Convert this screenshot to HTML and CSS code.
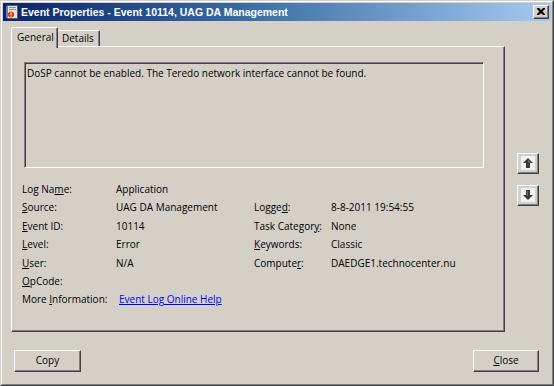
FILE: index.html
```html
<!DOCTYPE html>
<html>
<head>
<meta charset="utf-8">
<title>Event Properties</title>
<link rel="stylesheet" href="styles.css">
</head>
<body>
<div class="window">
  <div class="frame">
    <div class="titlebar">
      <svg class="appicon" width="14" height="14" viewBox="0 0 14 14">
        <rect x="2.5" y="0.5" width="10" height="13" fill="#e8e4dc" stroke="#5a5a6e"/>
        <rect x="4" y="2" width="7" height="1" fill="#8a8aa0"/>
        <rect x="4" y="4" width="7" height="1" fill="#8a8aa0"/>
        <rect x="1" y="1" width="2" height="12" fill="#6e7fa8"/>
        <circle cx="6" cy="9.5" r="3" fill="#e03020"/>
        <rect x="5.3" y="7.3" width="1.4" height="2.6" fill="#ffd840"/>
        <rect x="5.3" y="10.5" width="1.4" height="1.2" fill="#ffd840"/>
      </svg>
      <span class="title">Event Properties - Event 10114, UAG DA Management</span>
      <div class="xbtn">
        <svg width="8" height="7" viewBox="0 0 8 7">
          <path d="M0 0h2l2 2 2-2h2v1l-2.5 2.5L8 6v1H6L4 5 2 7H0V6l2.5-2.5L0 1z" fill="#000"/>
        </svg>
      </div>
    </div>
    <div class="content">
      <div class="main">
        <div class="left">
          <div class="tabs">
            <div class="tab active">General</div>
            <div class="tab">Details</div>
          </div>
          <div class="panel">
            <div class="msgbox">DoSP cannot be enabled. The Teredo network interface cannot be found.</div>
            <div class="props">
              <div>Log Na<u>m</u>e:</div><div>Application</div><div></div><div></div>
              <div><u>S</u>ource:</div><div>UAG DA Management</div><div>Logge<u>d</u>:</div><div>8-8-2011 19:54:55</div>
              <div><u>E</u>vent ID:</div><div>10114</div><div>Task Categor<u>y</u>:</div><div>None</div>
              <div><u>L</u>evel:</div><div>Error</div><div><u>K</u>eywords:</div><div>Classic</div>
              <div><u>U</u>ser:</div><div>N/A</div><div>Compute<u>r</u>:</div><div>DAEDGE1.technocenter.nu</div>
              <div><u>O</u>pCode:</div><div></div><div></div><div></div>
              <div>More <u>I</u>nformation:</div><div><a class="link" href="#">Event Log Online Help</a></div><div></div><div></div>
            </div>
          </div>
        </div>
        <div class="arrows">
          <div class="abtn">
            <svg width="14" height="14" viewBox="0 0 14 14">
              <rect width="14" height="14" fill="#f2f2f0"/>
              <path d="M7 2 L12 7 L9 7 L9 12 L5 12 L5 7 L2 7 Z" fill="#3a3a3a"/>
              <path d="M7 3.5 L10 6.5 L7 6.5 Z" fill="#6a6a6a"/>
            </svg>
          </div>
          <div class="abtn">
            <svg width="14" height="14" viewBox="0 0 14 14">
              <rect width="14" height="14" fill="#f2f2f0"/>
              <path d="M5 2 L9 2 L9 7 L12 7 L7 12 L2 7 L5 7 Z" fill="#3a3a3a"/>
              <path d="M5.8 3 L7 3 L7 8 L5.8 8 Z" fill="#6a6a6a"/>
            </svg>
          </div>
        </div>
      </div>
      <div class="buttons">
        <div class="btn copy">Copy</div>
        <div class="btn close"><u>C</u>lose</div>
      </div>
    </div>
  </div>
</div>
</body>
</html>
```

FILE: styles.css
```css
html, body {
  margin: 0;
  padding: 0;
  width: 554px;
  height: 386px;
  overflow: hidden;
  background: #d4d0c8;
}

body {
  font-family: "Open Sans", "Noto Sans", sans-serif;
  font-size: 10px;
  color: #000;
}

.window {
  box-sizing: border-box;
  width: 554px;
  height: 386px;
  border: 1px solid;
  border-color: #d4d0c8 #404040 #404040 #d4d0c8;
  background: #d4d0c8;
}

.frame {
  box-sizing: border-box;
  height: 100%;
  border: 1px solid;
  border-color: #fff #808080 #808080 #fff;
  padding: 1px;
  display: flex;
  flex-direction: column;
}

.titlebar {
  height: 18px;
  flex: none;
  display: flex;
  align-items: center;
  padding: 0 2px;
  background: linear-gradient(to right, #0a246a 0%, #3a6ea5 45%, #a6caf0 100%);
}

.appicon {
  flex: none;
  margin-right: 2px;
}

.title {
  font-family: "Liberation Sans", Arial, sans-serif;
  font-weight: bold;
  font-size: 10.5px;
  color: #fff;
  white-space: nowrap;
}

.xbtn {
  box-sizing: border-box;
  margin-left: auto;
  width: 16px;
  height: 14px;
  background: #d4d0c8;
  border: 1px solid;
  border-color: #fff #404040 #404040 #fff;
  box-shadow: inset -1px -1px 0 #808080;
  display: flex;
  align-items: center;
  justify-content: center;
  padding: 0 1px 1px 0;
}

.content {
  flex: 1;
  padding: 6px 12px 0 8px;
}

.main {
  display: flex;
}

.left {
  width: 494px;
}

.tabs {
  display: flex;
  align-items: flex-end;
  height: 19px;
  position: relative;
  z-index: 1;
}

.tab {
  box-sizing: border-box;
  height: 16px;
  padding: 0 4px;
  border: 1px solid;
  border-bottom: none;
  border-color: #fff #404040 transparent #fff;
  box-shadow: inset -1px 0 0 #808080;
  border-radius: 2px 2px 0 0;
  line-height: 15px;
  background: #d4d0c8;
}

.tab.active {
  width: 47px;
  height: 21px;
  margin-bottom: -2px;
  padding: 0 4px 0 5px;
  line-height: 18px;
}

.tab + .tab {
  width: 42px;
  padding-left: 4px;
  border-left: none;
}

.panel {
  box-sizing: border-box;
  height: 286px;
  border: 1px solid;
  border-color: #fff #404040 #404040 #fff;
  box-shadow: inset -1px -1px 0 #808080;
  padding: 15px 10px 0 10px;
}

.msgbox {
  box-sizing: border-box;
  width: 460px;
  height: 106px;
  margin-left: 2px;
  border: 1px solid;
  border-color: #808080 #fff #fff #808080;
  box-shadow: inset 1px 1px 0 #404040, inset -1px -1px 0 #d4d0c8;
  padding: 2px 2px;
  line-height: 16px;
}

.props {
  margin-top: 12px;
  display: grid;
  grid-template-columns: 94px 138px 77px 1fr;
  grid-auto-rows: 18.4px;
  line-height: 18.4px;
  white-space: nowrap;
}

.link {
  color: #0000ff;
  margin-left: 3px;
}

.arrows {
  display: flex;
  flex-direction: column;
  gap: 11px;
  padding-top: 126px;
  margin-left: 12px;
}

.abtn {
  box-sizing: border-box;
  width: 22px;
  height: 21px;
  border: 1px solid;
  border-color: #fff #404040 #404040 #fff;
  box-shadow: inset -1px -1px 0 #808080;
  display: flex;
  align-items: center;
  justify-content: center;
  padding: 0 1px 1px 0;
}

.buttons {
  display: flex;
  justify-content: space-between;
  margin-top: 18px;
}

.btn {
  box-sizing: border-box;
  height: 22px;
  border: 1px solid;
  border-color: #fff #404040 #404040 #fff;
  box-shadow: inset -1px -1px 0 #808080;
  text-align: center;
  line-height: 19px;
}

.copy {
  width: 67px;
  margin-left: 3px;
}

.close {
  width: 66px;
}
```
